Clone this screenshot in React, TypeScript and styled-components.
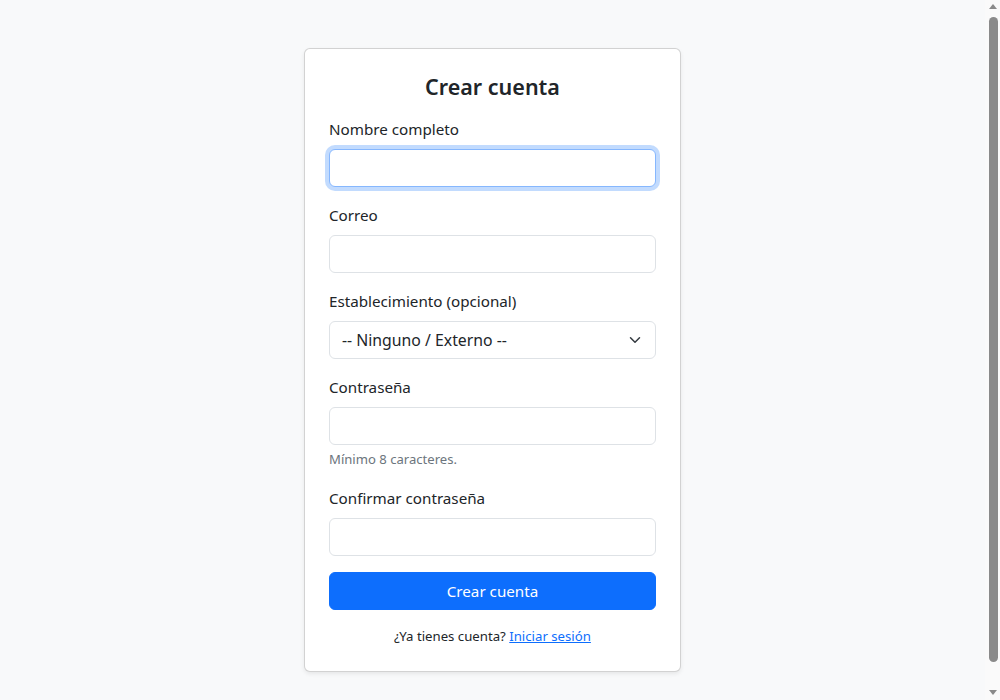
import React from "react";
import styled, { createGlobalStyle } from "styled-components";

const GlobalStyle = createGlobalStyle`
  html, body {
    margin: 0;
    padding: 0;
    background: #f8f9fa;
  }
  body {
    font-family: "Noto Sans", "Open Sans", sans-serif;
    font-size: 15.2px;
    line-height: 24px;
    color: #212529;
  }
  * {
    box-sizing: border-box;
  }
`;

const Page = styled.div`
  min-height: 730px;
  padding: 48px 15px 58px 0;
  display: flex;
  justify-content: center;
  align-items: flex-start;
`;

const Card = styled.div`
  width: 377px;
  background: #fff;
  border: 1px solid rgba(0, 0, 0, 0.175);
  border-radius: 6px;
  box-shadow: 0 0.125rem 0.25rem rgba(0, 0, 0, 0.075);
  padding: 24px;
`;

const Title = styled.h4`
  margin: 0 0 16px;
  font-size: 21.5px;
  line-height: 28px;
  font-weight: 600;
  text-align: center;
`;

const Field = styled.div`
  margin-bottom: 16px;
`;

const Label = styled.label`
  display: block;
  margin-bottom: 8px;
`;

const Input = styled.input<{ $focus?: boolean }>`
  display: block;
  width: 100%;
  height: 38px;
  padding: 6px 12px;
  font: inherit;
  color: #212529;
  background: #fff;
  border: 1px solid ${(p) => (p.$focus ? "#86b7fe" : "#dee2e6")};
  border-radius: 6px;
  outline: none;
  box-shadow: ${(p) => (p.$focus ? "0 0 0 4px rgba(13, 110, 253, 0.25)" : "none")};
`;

const SelectBox = styled.div`
  display: flex;
  align-items: center;
  justify-content: space-between;
  height: 38px;
  padding: 6px 12px;
  border: 1px solid #dee2e6;
  border-radius: 6px;
  background: #fff;
  font-size: 15.8px;
`;

const Help = styled.div`
  margin-top: 4px;
  font-size: 13.1px;
  line-height: 21px;
  color: #6c757d;
`;

const Button = styled.button`
  display: block;
  width: 100%;
  height: 38px;
  margin: 0 0 16px;
  font: inherit;
  color: #fff;
  background: #0d6efd;
  border: 1px solid #0d6efd;
  border-radius: 6px;
  cursor: pointer;
`;

const Footer = styled.p`
  margin: 0;
  font-size: 13.2px;
  line-height: 21px;
  text-align: center;

  a {
    color: #0d6efd;
    text-decoration: underline;
  }
`;

const Scrollbar = styled.div`
  position: fixed;
  top: 0;
  right: 0;
  width: 15px;
  height: 100vh;
  background: #fafafa;
  display: flex;
  flex-direction: column;
  align-items: center;
  padding: 4px 0 5px;
`;

const Arrow = styled.div<{ $down?: boolean }>`
  width: 0;
  height: 0;
  border-left: 4px solid transparent;
  border-right: 4px solid transparent;
  ${(p) =>
    p.$down
      ? "border-top: 5px solid #8a8a8a; margin-top: auto;"
      : "border-bottom: 5px solid #8a8a8a;"}
`;

const Thumb = styled.div`
  width: 9px;
  height: 645px;
  margin-top: 8px;
  margin-left: 1px;
  background: #8a8a8a;
  border-radius: 5px;
`;

const Chevron = () => (
  <svg width="16" height="12" viewBox="0 0 16 16">
    <path
      d="m2 5 6 6 6-6"
      fill="none"
      stroke="#343a40"
      strokeWidth="2"
      strokeLinecap="round"
      strokeLinejoin="round"
    />
  </svg>
);

export default function App() {
  return (
    <>
      <GlobalStyle />
      <Page>
        <Card>
          <Title>Crear cuenta</Title>
          <Field>
            <Label>Nombre completo</Label>
            <Input $focus />
          </Field>
          <Field>
            <Label>Correo</Label>
            <Input />
          </Field>
          <Field>
            <Label>Establecimiento (opcional)</Label>
            <SelectBox>
              <span>-- Ninguno / Externo --</span>
              <Chevron />
            </SelectBox>
          </Field>
          <Field>
            <Label>Contraseña</Label>
            <Input type="password" />
            <Help>Mínimo 8 caracteres.</Help>
          </Field>
          <Field>
            <Label>Confirmar contraseña</Label>
            <Input type="password" />
          </Field>
          <Button>Crear cuenta</Button>
          <Footer>
            ¿Ya tienes cuenta? <a href="#">Iniciar sesión</a>
          </Footer>
        </Card>
      </Page>
      <Scrollbar>
        <Arrow />
        <Thumb />
        <Arrow $down />
      </Scrollbar>
    </>
  );
}
